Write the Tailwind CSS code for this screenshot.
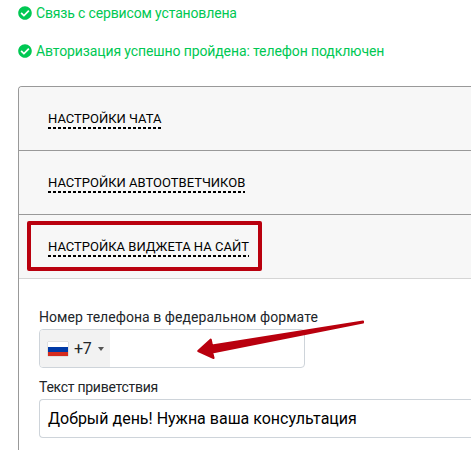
<!DOCTYPE html>
<html lang="ru">
<head>
<meta charset="utf-8">
<title>Настройки</title>
<script src="https://cdn.jsdelivr.net/npm/@tailwindcss/browser@4"></script>
</head>
<body class="relative w-[471px] h-[450px] overflow-hidden bg-white font-[Roboto,sans-serif] text-sm text-[#212529]">
<div class="pl-[18px] pt-[3px] text-[#00c853]">
  <p class="flex items-center h-5 mb-[18px] whitespace-nowrap">
    <svg class="size-3.5 mr-1" viewBox="0 0 512 512" fill="currentColor"><path d="M504 256c0 136.967-111.033 248-248 248S8 392.967 8 256 119.033 8 256 8s248 111.033 248 248zM227.314 387.314l184-184c6.248-6.248 6.248-16.379 0-22.627l-22.627-22.627c-6.248-6.249-16.379-6.249-22.628 0L216 308.118l-70.059-70.059c-6.248-6.248-16.379-6.248-22.628 0l-22.627 22.627c-6.248 6.248-6.248 16.379 0 22.627l104 104c6.249 6.249 16.379 6.249 22.628.001z"/></svg>
    <span class="tracking-[-0.15px]">Связь с сервисом установлена</span>
  </p>
  <p class="flex items-center h-5 whitespace-nowrap">
    <svg class="size-3.5 mr-1" viewBox="0 0 512 512" fill="currentColor"><path d="M504 256c0 136.967-111.033 248-248 248S8 392.967 8 256 119.033 8 256 8s248 111.033 248 248zM227.314 387.314l184-184c6.248-6.248 6.248-16.379 0-22.627l-22.627-22.627c-6.248-6.249-16.379-6.249-22.628 0L216 308.118l-70.059-70.059c-6.248-6.248-16.379-6.248-22.628 0l-22.627 22.627c-6.248 6.248-6.248 16.379 0 22.627l104 104c6.249 6.249 16.379 6.249 22.628.001z"/></svg>
    <span class="tracking-[-0.11px]">Авторизация успешно пройдена: телефон подключен</span>
  </p>
</div>
<div class="ml-[18px] mt-[25px] h-[380px] w-[453px] border border-r-0 border-[#999] rounded-tl-[4px] overflow-hidden text-black">
  <div class="flex items-start h-16 pl-[29px] pt-[22px] bg-[#f7f7f7] border-b border-[#999] text-[13px] leading-5 whitespace-nowrap"><span class="h-5 bg-[repeating-linear-gradient(90deg,#000_0_3px,transparent_3px_5px)] bg-[length:100%_2px] bg-bottom bg-no-repeat">НАСТРОЙКИ ЧАТА</span></div>
  <div class="flex items-start h-16 pl-[29px] pt-[22px] bg-[#f7f7f7] border-b border-[#999] text-[13px] leading-5 whitespace-nowrap"><span class="h-5 bg-[repeating-linear-gradient(90deg,#000_0_3px,transparent_3px_5px)] bg-[length:100%_2px] bg-bottom bg-no-repeat">НАСТРОЙКИ АВТООТВЕТЧИКОВ</span></div>
  <div class="flex items-start h-16 pl-[29px] pt-[22px] bg-[#f7f7f7] border-b border-[#d5d5d5] text-[13px] leading-5 whitespace-nowrap"><span class="h-5 bg-[repeating-linear-gradient(90deg,#000_0_3px,transparent_3px_5px)] bg-[length:100%_2px] bg-bottom bg-no-repeat">НАСТРОЙКА ВИДЖЕТА НА САЙТ</span></div>
  <div class="pl-5 pt-[28px]">
    <div class="h-[22px] leading-5 text-[#212529] tracking-[0.05px] whitespace-nowrap">Номер телефона в федеральном формате</div>
    <div class="flex w-[266px] h-[39px] border border-[#ced4da] rounded-[4px] overflow-hidden">
      <div class="flex items-center w-[70px] pl-2 bg-[#f2f2f2] text-base text-[#212529]">
        <svg class="w-5 h-3.5 mr-1.5 shadow-[0_0_1px_0_#888]" viewBox="0 0 20 14"><path fill="#fff" d="M0 0h20v5H0z"/><path fill="#0039a6" d="M0 5h20v5H0z"/><path fill="#d52b1e" d="M0 10h20v4H0z"/></svg>
        <span class="tracking-[-0.3px]">+7</span>
        <svg class="w-1.5 h-1 ml-[7px]" viewBox="0 0 6 4"><path fill="#555" d="M0 0h6L3 4z"/></svg>
      </div>
    </div>
    <div class="h-[31px] pt-[9px] leading-5 text-[#212529] tracking-[-0.27px]">Текст приветствия</div>
    <div class="flex items-center h-[39px] pl-2 border border-r-0 border-[#ced4da] rounded-l-[4px] text-base text-black whitespace-nowrap">Добрый день! Нужна ваша консультация</div>
  </div>
</div>
<div class="absolute left-[27px] top-[221px] w-[235px] h-[50px] border-4 border-[#b9000e] rounded-[2px]"></div>
<svg class="absolute left-0 top-0" width="471" height="450" viewBox="0 0 471 450"><path fill="#b9000e" stroke="#b9000e" stroke-width="2" stroke-linejoin="round" d="M198.200 351L210.800 339.600L212 345.500L363 321.500v1L212.200 352.500L213.600 358z"/></svg>
</body>
</html>
